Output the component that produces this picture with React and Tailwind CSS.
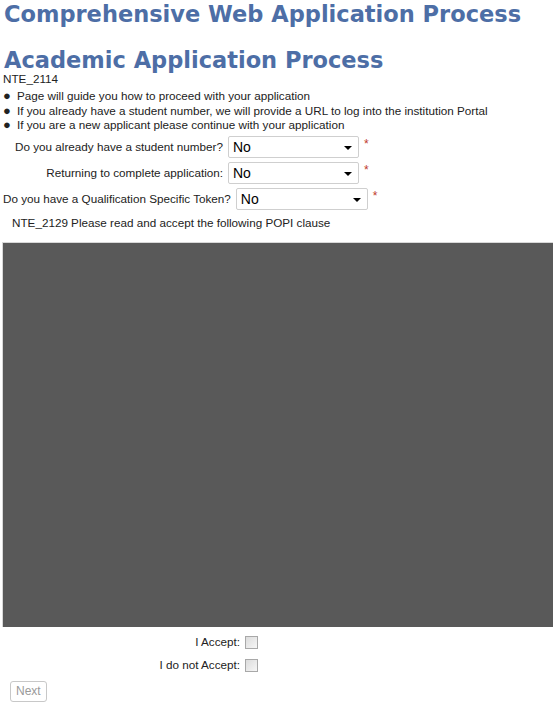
import React from "react";

function Select({ width }) {
  return (
    <div className={`relative flex items-center h-[22px] ${width} border border-[#cfcfcf] rounded-[2px] bg-white pl-[4px] text-[14px] text-black`}>
      <span className="mt-[2px]">No</span>
      <span className="absolute right-[6px] top-[9px] w-0 h-0 border-l-[4px] border-r-[4px] border-t-[4px] border-l-transparent border-r-transparent border-t-black" />
    </div>
  );
}

function Star() {
  return <span className="self-start text-[#c0392b] text-[12px] leading-none ml-[5px] mt-[2px]">*</span>;
}

function CheckRow({ label }) {
  return (
    <div className="flex items-center h-[23px]">
      <span className="w-[245px] text-right pr-[5px]">{label}</span>
      <span className="w-[13px] h-[13px] border border-[#a8a8a8] bg-gradient-to-br from-[#dcdcdc] to-[#f6f6f6]" />
    </div>
  );
}

export default function App() {
  return (
    <div className="w-[553px] h-[710px] overflow-hidden bg-white text-[11.7px] text-[#222] font-['Liberation_Sans',Arial,sans-serif]">
      <h1 className="pl-[4px] pt-[1px] h-[49px] text-[22.5px] leading-[26px] font-bold text-[#4d6ea6] font-['DejaVu_Sans',Verdana,sans-serif] whitespace-nowrap">
        Comprehensive Web Application Process
      </h1>
      <h2 className="pl-[4px] h-[23px] text-[22.5px] leading-[23px] font-bold text-[#4d6ea6] font-['DejaVu_Sans',Verdana,sans-serif] whitespace-nowrap">
        Academic Application Process
      </h2>
      <div className="pl-[3px] leading-[14px]">NTE_2114</div>
      <ul className="mt-[3px] leading-[14.5px]">
        {[
          "Page will guide you how to proceed with your application",
          "If you already have a student number, we will provide a URL to log into the institution Portal",
          "If you are a new applicant please continue with your application",
        ].map((t) => (
          <li key={t} className="flex">
            <span className="w-[17px] pl-[3px] text-[13px]">●</span>
            <span>{t}</span>
          </li>
        ))}
      </ul>
      <div className="mt-[3px] flex flex-col gap-[4px]">
        <div className="flex items-center">
          <span className="w-[228px] text-right pr-[5px]">Do you already have a student number?</span>
          <Select width="w-[131px]" />
          <Star />
        </div>
        <div className="flex items-center">
          <span className="w-[228px] text-right pr-[5px]">Returning to complete application:</span>
          <Select width="w-[131px]" />
          <Star />
        </div>
        <div className="flex items-center">
          <span className="pl-[3px] pr-[5px]">Do you have a Qualification Specific Token?</span>
          <Select width="w-[132px]" />
          <Star />
        </div>
      </div>
      <div className="pl-[12px] mt-[6px] leading-[14px]">NTE_2129 Please read and accept the following POPI clause</div>
      <div className="ml-[2px] mt-[12px] h-[385px] bg-[#595959] border-t border-l border-[#d8d8d8]" />
      <div className="mt-[4px]">
        <CheckRow label="I Accept:" />
        <CheckRow label="I do not Accept:" />
      </div>
      <button
        disabled
        className="ml-[10px] mt-[4px] h-[21px] px-[5px] border border-[#c8c8c8] rounded-[3px] bg-white text-[#9a9a9a] text-[12px]"
      >
        Next
      </button>
    </div>
  );
}
